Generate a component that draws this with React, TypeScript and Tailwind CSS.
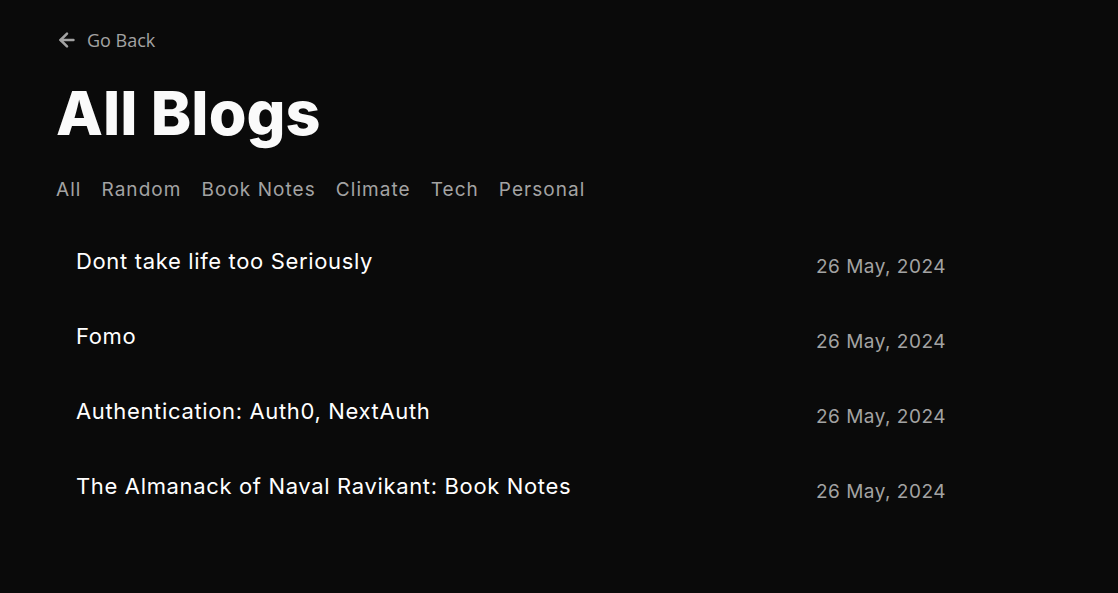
import { ArrowLeft } from "lucide-react";

type Post = {
  id: number;
  title: string;
  date: string;
};

const posts: Post[] = [
  { id: 1, title: "Dont take life too Seriously", date: "26 May, 2024" },
  { id: 2, title: "Fomo", date: "26 May, 2024" },
  { id: 3, title: "Authentication: Auth0, NextAuth", date: "26 May, 2024" },
  { id: 4, title: "The Almanack of Naval Ravikant: Book Notes", date: "26 May, 2024" },
];

const categories = ["All", "Random", "Book Notes", "Climate", "Tech", "Personal"];

const App = () => {
  return (
    <div className="min-h-[593px] w-full bg-[#0a0a0a] pl-[56px] pt-[28px] font-['Inter',sans-serif]">
      <a href="#" className="flex items-center gap-[9px] text-[18px] text-[#a3a3a3] font-['Open_Sans',sans-serif] leading-[24px]">
        <ArrowLeft className="h-[22px] w-[22px]" strokeWidth={2.75} />
        Go Back
      </a>

      <h1 className="mt-[26px] text-[61px] font-extrabold leading-[70px] text-[#fafafa]">
        All Blogs
      </h1>

      <div className="mt-[28px] flex gap-[20px] text-[19px] leading-[28px] tracking-[1.05px] text-[#a3a3a3]">
        {categories.map((c) => (
          <button key={c} className="cursor-pointer">
            {c}
          </button>
        ))}
      </div>

      <div className="mt-[42px] flex w-[910px] flex-col gap-[39px]">
        {posts.map((post) => (
          <div key={post.id} className="flex items-start justify-between px-[20px]">
            <h3 className="text-[22px] leading-[30px] tracking-[0.65px] text-white">{post.title}</h3>
            <p className="mt-[6px] text-[19px] leading-[30px] tracking-[0.5px] text-[#a3a3a3]">{post.date}</p>
          </div>
        ))}
      </div>
    </div>
  );
};

export default App;
